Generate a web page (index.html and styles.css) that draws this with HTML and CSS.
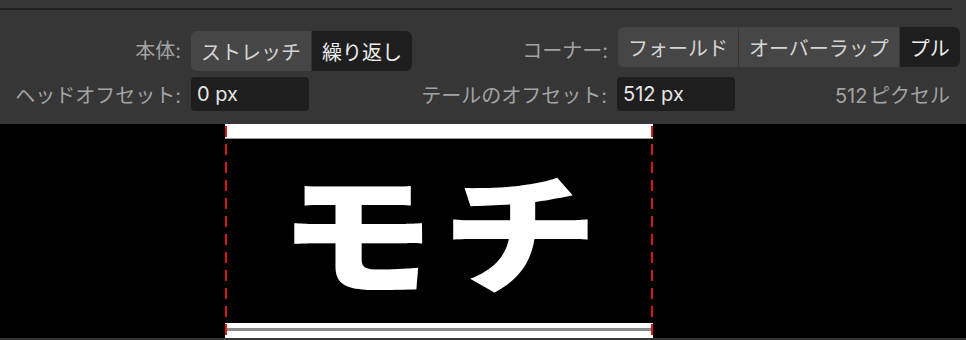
FILE: index.html
```html
<!DOCTYPE html>
<html lang="ja">
<head>
    <meta charset="UTF-8">
    <meta name="viewport" content="width=device-width, initial-scale=1.0">
    <title>ストレッチ設定</title>
    <link rel="stylesheet" href="styles.css">
</head>
<body>
    <div id="panel">
        <div class="divider"></div>
        <div class="row row-top">
            <span class="label label-body">本体:</span>
            <div class="seg seg-body">
                <span class="seg-item">ストレッチ</span>
                <span class="seg-item active">繰り返し</span>
            </div>
            <span class="label label-corner">コーナー:</span>
            <div class="seg seg-corner">
                <span class="seg-item">フォールド</span>
                <span class="seg-item">オーバーラップ</span>
                <span class="seg-item active">プル</span>
            </div>
        </div>
        <div class="row row-bottom">
            <span class="label label-head">ヘッドオフセット:</span>
            <div class="field">0 px</div>
            <span class="label label-tail">テールのオフセット:</span>
            <div class="field">512 px</div>
            <span class="size">512 ピクセル</span>
        </div>
    </div>
    <div id="stage">
        <div class="card">
            <div class="band-top"></div>
            <div class="card-body"><span class="word">モチ</span></div>
            <div class="band-bottom"><div class="band-line"></div></div>
        </div>
    </div>
</body>
</html>
```

FILE: styles.css
```css
body{
    margin: 0;
    width: 966px;
    height: 340px;
    overflow: hidden;
    background: #363636;
    font-family: Inter, "Noto Sans CJK JP", sans-serif;
    font-size: 20px;
}
#panel{
    height: 124px;
    box-sizing: border-box;
    padding-top: 8px;
}
.divider{
    width: 952px;
    height: 2px;
    background: #1f1f1f;
}
.row{
    display: flex;
    align-items: center;
}
.row-top{
    height: 44px;
    margin-top: 17px;
}
.row-bottom{
    height: 34px;
    margin-top: 6px;
}
.label{
    color: #a3a3a3;
    text-align: right;
    margin-right: 10px;
    white-space: nowrap;
}
.label-body{ width: 181px; }
.label-corner{ width: 196px; }
.label-head{ width: 181px; }
.label-tail{ width: 298px; }

.seg{
    display: flex;
    height: 40px;
    border-radius: 6px;
    overflow: hidden;
    background: #464646;
}
.seg-body{ margin-top: 4px; }
.seg-corner{ margin-top: -4px; }
.seg-item{
    display: flex;
    align-items: center;
    padding: 0 10px;
    color: #d4d4d4;
    white-space: nowrap;
}
.seg-item + .seg-item{
    border-left: 1px solid #353535;
}
.seg-item.active{
    background: #1e1e1e;
    color: #ececec;
}
.field{
    width: 118px;
    height: 34px;
    box-sizing: border-box;
    padding: 0 6px;
    display: flex;
    align-items: center;
    background: #1e1e1e;
    border-radius: 4px;
    color: #e6e6e6;
}
.size{
    margin-left: auto;
    margin-right: 16px;
    color: #a3a3a3;
    white-space: nowrap;
    word-spacing: -3px;
}

#stage{
    height: 214px;
    background: #000;
    display: flex;
    padding-left: 225px;
    box-sizing: border-box;
}
.card{
    position: relative;
    width: 428px;
    display: flex;
    flex-direction: column;
    background: #000;
}
.card::before,
.card::after{
    content: "";
    position: absolute;
    top: 2px;
    bottom: 0;
    width: 2px;
    background: repeating-linear-gradient(#d81818 0 11px, transparent 11px 18px);
}
.card::before{ left: 0; }
.card::after{ right: 0; }
.band-top{
    height: 14px;
    background: #fff;
    border-bottom: 1px solid #9a9a9a;
}
.card-body{
    flex: 1;
    display: flex;
    align-items: center;
    justify-content: center;
}
.word{
    color: #fff;
    font-family: "Noto Sans CJK JP", sans-serif;
    font-weight: 900;
    font-size: 130px;
    line-height: 1;
    letter-spacing: 6px;
    margin-right: -6px;
    transform: translateY(-5px) scaleX(1.2);
}
.band-bottom{
    height: 15px;
    background: #fff;
    padding-top: 5px;
    box-sizing: border-box;
}
.band-line{
    height: 3px;
    background: #8a8a8a;
}
```
